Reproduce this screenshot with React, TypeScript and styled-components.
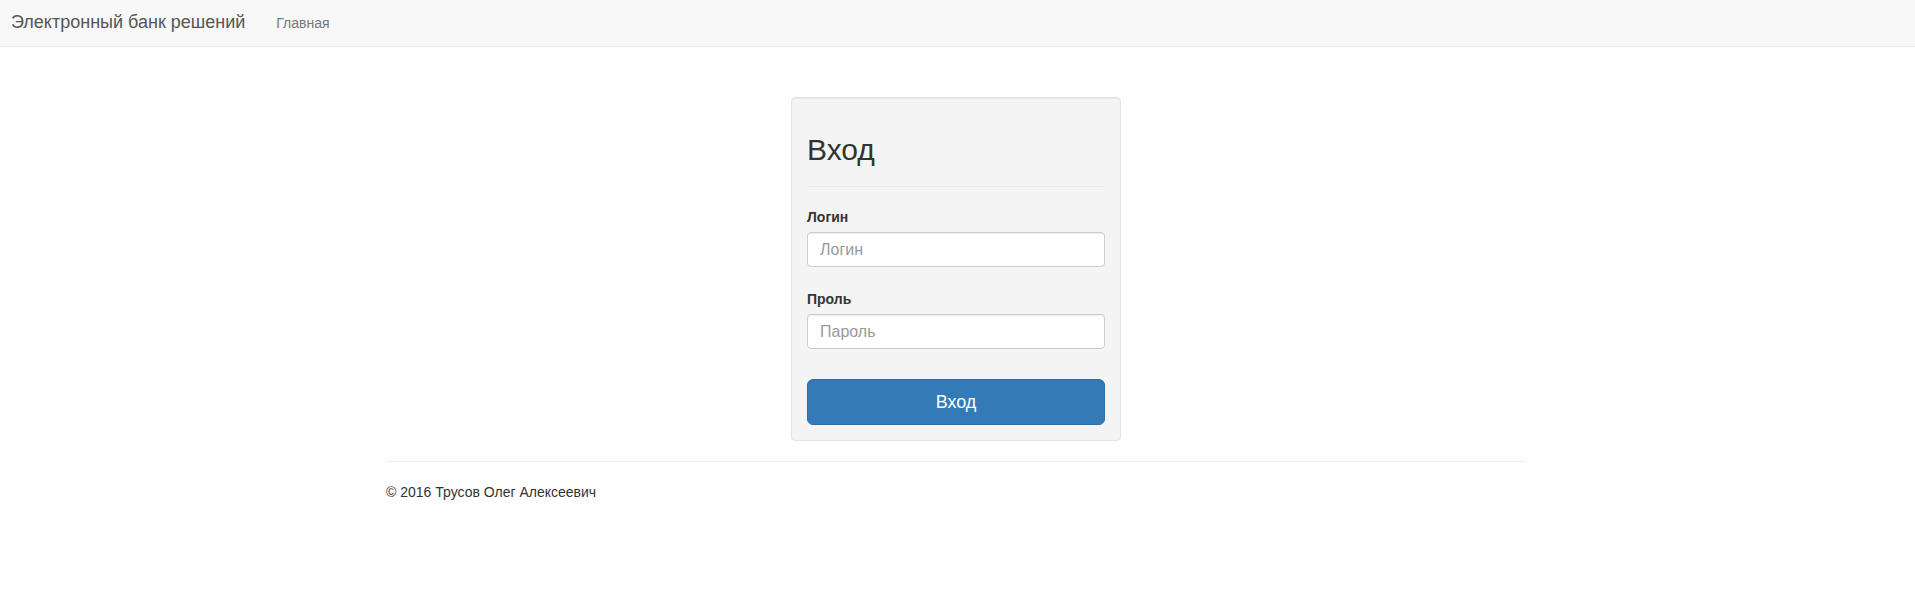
import React from "react";
import styled, { createGlobalStyle } from "styled-components";

const GlobalStyle = createGlobalStyle`
  * { box-sizing: border-box; }
  html, body { margin: 0; padding: 0; background: #fff; }
  body {
    font-family: "Liberation Sans", Arial, Helvetica, sans-serif;
    font-size: 14px;
    line-height: 20px;
    color: #333;
  }
`;

const Navbar = styled.nav`
  height: 47px;
  background: #f8f8f8;
  border-bottom: 1px solid #e7e7e7;
  display: flex;
  align-items: flex-start;
`;

const Brand = styled.a`
  display: block;
  padding: 12px 15px 0 11px;
  font-size: 18px;
  line-height: 20px;
  color: #555;
  text-decoration: none;
`;

const NavLink = styled.a`
  display: block;
  padding: 13px 15px 0 16px;
  font-size: 14px;
  line-height: 20px;
  color: #777;
  text-decoration: none;
`;

const Page = styled.div`
  padding-right: 3px;
`;

const Main = styled.main`
  width: 1140px;
  margin: 0 auto;
  padding-top: 50px;
`;

const Well = styled.div`
  width: 330px;
  margin: 0 auto;
  padding: 15px;
  background: #f4f4f4;
  border: 1px solid #e3e3e3;
  border-radius: 4px;
  box-shadow: inset 0 1px 1px rgba(0, 0, 0, 0.05);
`;

const Title = styled.h2`
  margin: 20px 0 0;
  font-size: 30px;
  line-height: 33px;
  font-weight: 500;
  color: #333;
`;

const Divider = styled.hr`
  margin: 20px 0;
  border: 0;
  border-top: 1px solid #eaeaea;
`;

const FormGroup = styled.div<{ $gap: number }>`
  margin-bottom: ${(p) => p.$gap}px;
`;

const Label = styled.label`
  display: inline-block;
  margin-bottom: 5px;
  font-weight: 700;
  font-size: 14px;
  line-height: 20px;
  color: #333;
`;

const Input = styled.input`
  display: block;
  width: 100%;
  height: 35px;
  padding: 6px 12px;
  font-family: inherit;
  font-size: 16px;
  line-height: 20px;
  color: #555;
  background: #fff;
  border: 1px solid #ccc;
  border-radius: 4px;
  box-shadow: inset 0 1px 1px rgba(0, 0, 0, 0.075);
  outline: none;
  &::placeholder { color: #999; }
`;

const Button = styled.button`
  display: block;
  width: 100%;
  height: 46px;
  padding: 10px 16px;
  font-family: inherit;
  font-size: 18px;
  line-height: 24px;
  color: #fff;
  background: #337ab7;
  border: 1px solid #2e6da4;
  border-radius: 6px;
  cursor: pointer;
`;

const Footer = styled.footer`
  margin-top: 20px;
  border-top: 1px solid #eee;
  padding-top: 20px;
`;

const FooterText = styled.p`
  margin: 0;
  font-size: 14px;
  line-height: 20px;
  color: #333;
`;

export default function App() {
  return (
    <>
      <GlobalStyle />
      <Navbar>
        <Brand href="#">Электронный банк решений</Brand>
        <NavLink href="#">Главная</NavLink>
      </Navbar>
      <Page>
        <Main>
          <Well>
            <Title>Вход</Title>
            <Divider />
            <FormGroup $gap={22}>
              <Label>Логин</Label>
              <Input placeholder="Логин" />
            </FormGroup>
            <FormGroup $gap={30}>
              <Label>Проль</Label>
              <Input type="password" placeholder="Пароль" />
            </FormGroup>
            <Button type="button">Вход</Button>
          </Well>
          <Footer>
            <FooterText>© 2016 Трусов Олег Алексеевич</FooterText>
          </Footer>
        </Main>
      </Page>
    </>
  );
}
